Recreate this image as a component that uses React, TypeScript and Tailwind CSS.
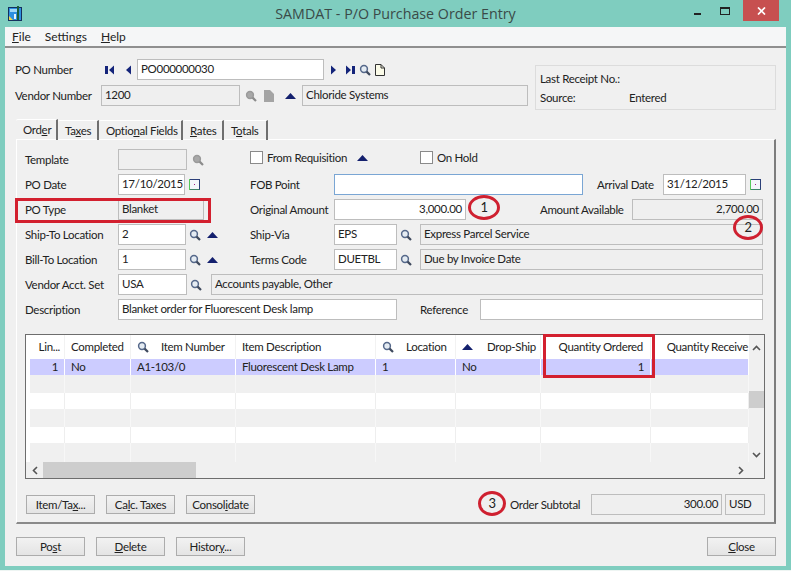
import type { ReactNode } from "react";

const font = "font-['Lato','Open_Sans',sans-serif] text-[11.5px] tracking-[-0.3px] text-[#222]";

// small icon set copied by eye from the Sage toolbar
const Search = ({ off }: { off?: boolean }) => (
  <svg width="12" height="12" viewBox="0 0 12 12" className="shrink-0">
    <circle cx="5" cy="5" r="3.4" fill={off ? "#a8a8a8" : "#e4ebf2"} stroke={off ? "#9a9a9a" : "#55688a"} strokeWidth="1.5" />
    <path d="M7.6 7.6 11 11" stroke={off ? "#8c8c8c" : "#3f4a5e"} strokeWidth="2.2" />
  </svg>
);

const UpArrow = () => (
  <svg width="11" height="6" viewBox="0 0 11 6" className="shrink-0">
    <path d="M5.5 0 11 6H0Z" fill="#14206e" />
  </svg>
);

const Calendar = () => (
  <svg width="11" height="11" viewBox="0 0 11 11" className="shrink-0">
    <rect x="0.5" y="0.5" width="10" height="10" fill="#f4f6fa" stroke="#2b3f78" />
    <path d="M.5 0v11h10" fill="none" stroke="#55c95a" />
    <rect x="5" y="5" width="1" height="1" fill="#a0208a" />
  </svg>
);

const Doc = ({ off }: { off?: boolean }) =>
  off ? (
    <svg width="10" height="12" viewBox="0 0 10 12" className="shrink-0">
      <path d="M0 0h6l4 4v8H0Z" fill="#a4a4a4" />
    </svg>
  ) : (
    <svg width="10" height="12" viewBox="0 0 10 12" className="shrink-0">
      <path d="M.5.5h5.5l3.5 3.5v7.5h-9Z" fill="#fbfbe8" stroke="#333" />
      <path d="M6 .5V4h3.5" fill="none" stroke="#333" />
    </svg>
  );

const Nav = ({ dir, bar }: { dir: "l" | "r"; bar?: boolean }) => (
  <svg width="10" height="10" viewBox="0 0 10 10" className="shrink-0">
    {dir === "l" ? (
      <>
        {bar && <rect x="0" y="1" width="3" height="8" fill="#14247a" />}
        <path d="M9 0.5V9.5L4 5Z" fill="#14247a" />
      </>
    ) : (
      <>
        <path d="M1 0.5V9.5L6 5Z" fill="#14247a" />
        {bar && <rect x="7" y="1" width="3" height="8" fill="#14247a" />}
      </>
    )}
  </svg>
);

const Box = ({ w, off, right, blue, children }: { w: string; off?: boolean; right?: boolean; blue?: boolean; children?: ReactNode }) => (
  <div
    className={`${w} h-[21px] shrink-0 border px-[3px] leading-[17px] whitespace-nowrap overflow-hidden ${
      blue ? "border-[#7aa6d4] bg-white" : off ? "border-[#bdbdbd] bg-[#efefef]" : "border-[#bdbdbd] bg-white"
    } ${right ? "text-right" : ""}`}
  >
    {children}
  </div>
);

const Btn = ({ children }: { children: ReactNode }) => (
  <button className="w-[69px] h-[19px] shrink-0 border border-[#acacac] bg-gradient-to-b from-[#f2f2f2] to-[#e4e4e4] text-center leading-[16px]">
    {children}
  </button>
);

const Check = ({ label }: { label: string }) => (
  <div className="flex items-center gap-[4px]">
    <span className="w-[13px] h-[13px] border border-[#8a8a8a] bg-white" />
    <span>{label}</span>
  </div>
);

const Tab = ({ w, active, children }: { w: string; active?: boolean; children: ReactNode }) => (
  <div
    className={`${w} ${active ? "h-[21px] pl-[7px]" : "h-[20px] pl-[7px]"} border-r-2 border-r-[#6f6f6f] border-t border-t-white flex items-center rounded-tl-[2px] whitespace-nowrap`}
  >
    <span>{children}</span>
  </div>
);

const gridCols = "grid grid-cols-[35px_66px_105px_140px_80px_85px_110px_98px]";

const rows = [
  { h: "h-[16px]", bg: "bg-[#ccccff]", line: "border-white" },
  { h: "h-[18px]", bg: "bg-[#f0f0f0]", line: "border-[#f7f7f7]" },
  { h: "h-[16px]", bg: "bg-white", line: "border-[#eeeeee]" },
  { h: "h-[18px]", bg: "bg-[#f0f0f0]", line: "border-[#f7f7f7]" },
  { h: "h-[16px]", bg: "bg-white", line: "border-[#eeeeee]" },
  { h: "h-[19px]", bg: "bg-[#f0f0f0]", line: "border-[#f7f7f7]" },
];

const firstRow = ["1", "No", "A1-103/0", "Fluorescent Desk Lamp", "1", "No", "1", ""];

export default function App() {
  return (
    <div className={`relative w-[791px] h-[571px] overflow-hidden bg-[#7fcdbf] flex flex-col ${font}`}>
      {/* Title bar */}
      <div className="h-[27px] shrink-0 grid grid-cols-[1fr_auto_1fr] items-center">
        <svg width="14" height="15" viewBox="0 0 14 15" className="ml-[8px]">
          <rect x="0.5" y="1.5" width="13" height="13" fill="#2d8fe0" stroke="#14305e" />
          <rect x="2" y="3" width="7" height="3" fill="#9fd6f5" />
          <rect x="9" y="0" width="2" height="14" fill="#1c5e3a" />
          <path d="M1 14V10L5 14Z" fill="#f2d54a" />
          <rect x="6" y="8" width="2" height="5" fill="#e8f4fc" />
        </svg>
        <div className="text-[14.25px] tracking-normal text-[#3a4a48] font-['Open_Sans',sans-serif] leading-[27px]">
          SAMDAT - P/O Purchase Order Entry
        </div>
        <div className="flex justify-end items-start h-[27px] pr-[12px]">
          <svg width="10" height="10" viewBox="0 0 10 10" className="mt-[9px] mr-[17px]">
            <rect x="1" y="4" width="7" height="2" fill="#222" />
          </svg>
          <svg width="11" height="9" viewBox="0 0 11 9" className="mt-[7px] mr-[12px]">
            <rect x="0.5" y="0.5" width="9" height="7" fill="none" stroke="#222" strokeWidth="1" />
            <rect x="0" y="0" width="10" height="2" fill="#222" />
          </svg>
          <div className="w-[36px] h-[21px] bg-[#c75050] flex items-center justify-center">
            <svg width="9" height="8" viewBox="0 0 9 8">
              <path d="M1 .5 8 7.5M8 .5 1 7.5" stroke="#fff" strokeWidth="1.7" />
            </svg>
          </div>
        </div>
      </div>

      {/* Client area */}
      <div className="mx-[5px] w-[781px] h-[539px] shrink-0 flex flex-col">
        <div className="h-[21px] shrink-0 bg-[#f5f6f7] border-b-2 border-b-[#8f8f8f] flex items-center pl-[7px] gap-[14px] text-[12px] tracking-normal">
          <span><u>F</u>ile</span>
          <span>Settings</span>
          <span><u>H</u>elp</span>
        </div>

        <div className="flex-1 bg-[#f0f0f0] pt-[11px] pl-[10px]">
          {/* Header */}
          <div className="flex h-[51px]">
            <div className="w-[520px]">
              <div className="flex items-center h-[21px] mb-[5px]">
                <span className="w-[90px]">PO Number</span>
                <Nav dir="l" bar />
                <span className="w-[7px]" />
                <Nav dir="l" />
                <span className="w-[5px]" />
                <Box w="w-[187px]">PO000000030</Box>
                <span className="w-[6px]" />
                <Nav dir="r" />
                <span className="w-[5px]" />
                <Nav dir="r" bar />
                <span className="w-[4px]" />
                <Search />
                <span className="w-[4px]" />
                <Doc />
              </div>
              <div className="flex items-center h-[21px]">
                <span className="w-[86px]">Vendor Number</span>
                <Box w="w-[139px]" off>1200</Box>
                <span className="w-[5px]" />
                <Search off />
                <span className="w-[7px]" />
                <Doc off />
                <span className="w-[11px]" />
                <UpArrow />
                <span className="w-[6px]" />
                <Box w="w-[226px]" off>Chloride Systems</Box>
              </div>
            </div>
            <div className="w-[241px] h-[45px] mt-[6px] border border-[#dcdcdc] pl-[4px] pt-[3px] leading-[19px]">
              <div>Last Receipt No.:</div>
              <div className="flex">
                <span className="w-[89px]">Source:</span>
                <span>Entered</span>
              </div>
            </div>
          </div>

          {/* Tabs */}
          <div className="flex items-end h-[20px] ml-px mb-[-1px] mt-[10px]">
            <Tab w="w-[42px]" active>Ord<u>e</u>r</Tab>
            <Tab w="w-[41px]">Ta<u>x</u>es</Tab>
            <Tab w="w-[84px]">Optio<u>n</u>al Fields</Tab>
            <Tab w="w-[41px]"><u>R</u>ates</Tab>
            <Tab w="w-[44px]">T<u>o</u>tals</Tab>
          </div>

          {/* Panel */}
          <div className="ml-px w-[760px] h-[385px] border-t border-t-white border-l border-l-white border-r-2 border-r-[#7d7d7d] border-b-2 border-b-[#8a8a8a] pl-[8px] pt-[9px]">
            <div className="flex items-center h-[21px] mb-[4px]">
              <div className="w-[225px] flex items-center">
                <span className="w-[93px]">Template</span>
                <Box w="w-[69px]" off />
                <span className="w-[5px]" />
                <Search off />
              </div>
              <div className="w-[170px]">
                <div className="flex items-center gap-[10px] -mt-[4px]">
                  <Check label="From Requisition" />
                  <UpArrow />
                </div>
              </div>
              <div className="-mt-[4px]"><Check label="On Hold" /></div>
            </div>

            <div className="flex items-center h-[21px] mb-[4px]">
              <div className="w-[225px] flex items-center">
                <span className="w-[93px]">PO Date</span>
                <Box w="w-[67px]">17/10/2015</Box>
                <span className="w-[4px]" />
                <Calendar />
              </div>
              <span className="w-[84px]">FOB Point</span>
              <Box w="w-[249px]" blue />
              <span className="w-[14px]" />
              <span className="w-[66px]">Arrival Date</span>
              <Box w="w-[83px]">31/12/2015</Box>
              <span className="w-[4px]" />
              <Calendar />
            </div>

            <div className="flex items-center h-[21px] mb-[4px]">
              <div className="w-[225px] flex items-center">
                <span className="w-[93px]">PO Type</span>
                <Box w="w-[86px]" off>Blanket</Box>
              </div>
              <span className="w-[84px] whitespace-nowrap">Original Amount</span>
              <Box w="w-[132px]" right>3,000.00</Box>
              <span className="w-[74px]" />
              <span className="w-[92px] whitespace-nowrap">Amount Available</span>
              <Box w="w-[131px]" off right>2,700.00</Box>
            </div>

            <div className="flex items-center h-[21px] mb-[4px]">
              <div className="w-[225px] flex items-center">
                <span className="w-[93px]">Ship-To Location</span>
                <Box w="w-[68px]">2</Box>
                <span className="w-[3px]" />
                <Search />
                <span className="w-[6px]" />
                <UpArrow />
              </div>
              <span className="w-[84px]">Ship-Via</span>
              <Box w="w-[63px]">EPS</Box>
              <span className="w-[3px]" />
              <Search />
              <span className="w-[8px]" />
              <Box w="w-[343px]" off>Express Parcel Service</Box>
            </div>

            <div className="flex items-center h-[21px] mb-[4px]">
              <div className="w-[225px] flex items-center">
                <span className="w-[93px]">Bill-To Location</span>
                <Box w="w-[68px]">1</Box>
                <span className="w-[3px]" />
                <Search />
                <span className="w-[6px]" />
                <UpArrow />
              </div>
              <span className="w-[84px]">Terms Code</span>
              <Box w="w-[63px]">DUETBL</Box>
              <span className="w-[3px]" />
              <Search />
              <span className="w-[8px]" />
              <Box w="w-[343px]" off>Due by Invoice Date</Box>
            </div>

            <div className="flex items-center h-[21px] mb-[4px]">
              <span className="w-[93px]">Vendor Acct. Set</span>
              <Box w="w-[69px]">USA</Box>
              <span className="w-[3px]" />
              <Search />
              <span className="w-[9px]" />
              <Box w="w-[552px]" off>Accounts payable, Other</Box>
            </div>

            <div className="flex items-center h-[21px]">
              <span className="w-[93px]">Description</span>
              <Box w="w-[279px]">Blanket order for Fluorescent Desk lamp</Box>
              <span className="w-[23px]" />
              <span className="w-[60px]">Reference</span>
              <Box w="w-[283px]" />
            </div>

            {/* Detail grid */}
            <div className="mt-[14px] w-[740px] h-[145px] border border-[#6d6d6d] bg-white flex flex-col">
              <div className="flex h-[127px]">
                <div className="w-[723px]">
                  <div className="h-[24px] pl-[4px] grid grid-cols-[35px_66px_105px_140px_80px_85px_110px_98px] items-center border-b border-b-white">
                    <div className="h-full border-r border-r-[#f2f2f2] text-right pr-[4px] leading-[24px]">Lin...</div>
                    <div className="h-full border-r border-r-[#f2f2f2] pl-[6px] leading-[24px]">Completed</div>
                    <div className="h-full border-r border-r-[#f2f2f2] flex items-center pl-[6px] gap-[12px]"><Search />Item Number</div>
                    <div className="h-full border-r border-r-[#f2f2f2] pl-[6px] leading-[24px]">Item Description</div>
                    <div className="h-full border-r border-r-[#f2f2f2] flex items-center pl-[6px] gap-[12px]"><Search />Location</div>
                    <div className="h-full border-r border-r-[#f2f2f2] flex items-center pl-[6px] gap-[14px]"><UpArrow />Drop-Ship</div>
                    <div className="h-full border-r border-r-[#f2f2f2] text-right pr-[7px] leading-[24px]">Quantity Ordered</div>
                    <div className="h-full text-right pr-[1px] leading-[24px] whitespace-nowrap overflow-hidden">Quantity Receive</div>
                  </div>
                  {rows.map((r, i) => (
                    <div key={i} className="pl-[4px]">
                      <div className={`${gridCols} ${r.h} ${r.bg}`}>
                        {firstRow.map((c, j) => (
                          <div
                            key={j}
                            className={`border-r ${r.line} px-[6px] leading-[15px] whitespace-nowrap ${j === 0 || j === 6 ? "text-right" : ""}`}
                          >
                            {i === 0 ? c : ""}
                          </div>
                        ))}
                      </div>
                    </div>
                  ))}
                </div>
                {/* vertical scrollbar */}
                <div className="w-[15px] bg-[#f0f0f0] flex flex-col items-center">
                  <svg width="9" height="6" viewBox="0 0 9 6" className="mt-[10px]">
                    <path d="M1 5 4.5 1.5 8 5" fill="none" stroke="#555" strokeWidth="1.6" />
                  </svg>
                  <div className="w-full h-[17px] mt-[40px] bg-[#cdcdcd]" />
                  <svg width="9" height="6" viewBox="0 0 9 6" className="mt-[44px]">
                    <path d="M1 1 4.5 4.5 8 1" fill="none" stroke="#555" strokeWidth="1.6" />
                  </svg>
                </div>
              </div>
              {/* horizontal scrollbar */}
              <div className="h-[16px] bg-[#f0f0f0] flex items-center">
                <div className="w-[17px] flex justify-center">
                  <svg width="6" height="9" viewBox="0 0 6 9">
                    <path d="M5 1 1.5 4.5 5 8" fill="none" stroke="#555" strokeWidth="1.6" />
                  </svg>
                </div>
                <div className="w-[153px] h-full bg-[#cdcdcd]" />
                <div className="flex-1 flex justify-end pr-[20px]">
                  <svg width="6" height="9" viewBox="0 0 6 9">
                    <path d="M1 1 4.5 4.5 1 8" fill="none" stroke="#555" strokeWidth="1.6" />
                  </svg>
                </div>
              </div>
            </div>

            <div className="flex items-center h-[21px] mt-[15px] pl-px">
              <div className="flex gap-[11px]">
                <Btn>Item/Ta<u>x</u>...</Btn>
                <Btn>Ca<u>l</u>c. Taxes</Btn>
                <Btn>Consol<u>i</u>date</Btn>
              </div>
              <span className="w-[255px]" />
              <span className="w-[81px] whitespace-nowrap">Order Subtotal</span>
              <Box w="w-[131px]" off right>300.00</Box>
              <span className="w-[3px]" />
              <Box w="w-[40px]" off>USD</Box>
            </div>
          </div>

          {/* Footer */}
          <div className="flex gap-[11px] ml-px mt-[13px] w-[760px]">
            <Btn>Po<u>s</u>t</Btn>
            <Btn><u>D</u>elete</Btn>
            <Btn>Histor<u>y</u>...</Btn>
            <div className="ml-auto"><Btn><u>C</u>lose</Btn></div>
          </div>
        </div>
      </div>
      <div className="flex-1 border-b border-b-[#eef5f3]" />

      {/* Red annotations on top of the screenshot */}
      <div className="absolute left-[15px] top-[198px] w-[196px] h-[25px] border-[3px] border-[#d3202f]" />
      <div className="absolute left-[543px] top-[334px] w-[112px] h-[44px] border-[3px] border-[#d3202f]" />
      <div className="absolute left-[468px] top-[195px] w-[32px] h-[25px] rounded-[50%] border-[3px] border-[#cf2030] flex items-center justify-center text-[13px]">1</div>
      <div className="absolute left-[733px] top-[215px] w-[30px] h-[25px] rounded-[50%] border-[3px] border-[#cf2030] flex items-center justify-center text-[13px]">2</div>
      <div className="absolute left-[478px] top-[491px] w-[28px] h-[25px] rounded-[50%] border-[3px] border-[#cf2030] flex items-center justify-center text-[13px]">3</div>
    </div>
  );
}
